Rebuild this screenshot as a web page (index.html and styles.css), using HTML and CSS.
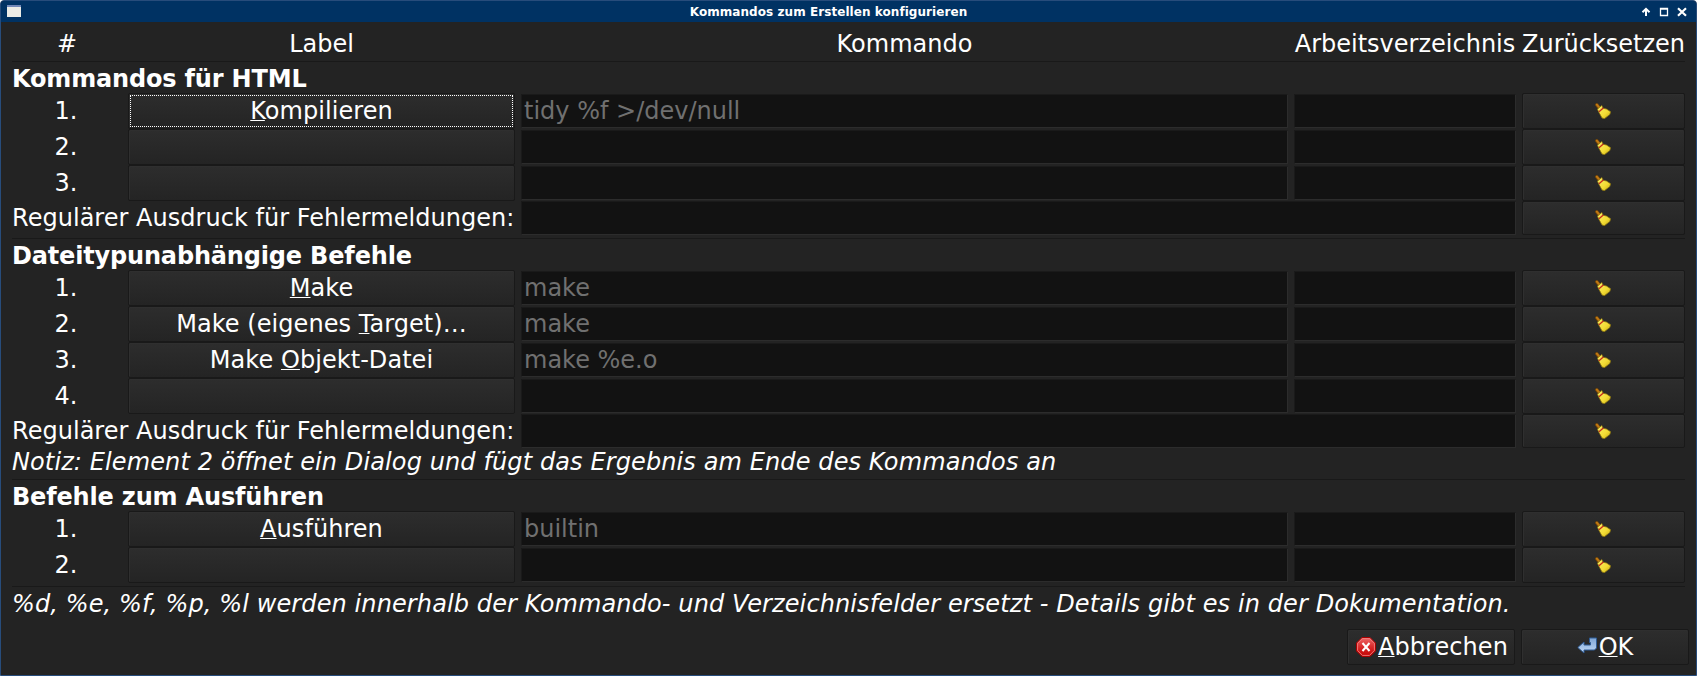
FILE: index.html
```
<!DOCTYPE html>
<html lang="de">
<head>
<meta charset="utf-8">
<title>Kommandos zum Erstellen konfigurieren</title>
<link rel="stylesheet" href="styles.css">
</head>
<body>
<svg class="defs" width="0" height="0" aria-hidden="true">
  <defs>
    <linearGradient id="gold" x1="0" y1="0" x2="1" y2="1"><stop offset="0" stop-color="#f8ec6a"/><stop offset=".6" stop-color="#f3dc34"/><stop offset="1" stop-color="#c4a812"/></linearGradient>
    <linearGradient id="red" x1="0" y1="0" x2="0" y2="1"><stop offset="0" stop-color="#ee6a6a"/><stop offset=".5" stop-color="#d92a2a"/><stop offset="1" stop-color="#c00000"/></linearGradient>
    <linearGradient id="blue" x1="0" y1="0" x2="0" y2="1"><stop offset="0" stop-color="#7fa6d6"/><stop offset="1" stop-color="#c0d8f4"/></linearGradient>
    <symbol id="broom" viewBox="0 0 16 16">
      <path d="M1.8 1.8 5 6" stroke="#7a4a08" stroke-width="3.4" stroke-linecap="round"/>
      <path d="M1.8 1.6 4.8 5.2" stroke="#c27a14" stroke-width="1.8" stroke-linecap="round"/>
      <path d="M2.400 6.200 6.800 2.400 8 5.200 11.500 6 15.700 8.800 14.800 11.600 9.400 15.700 7 15 4 9.600z" fill="url(#gold)" stroke="#857010" stroke-width=".8"/>
      <path d="M4 8.800 8.300 5" stroke="#c42a1c" stroke-width="1.300"/>
    </symbol>
  </defs>
</svg>
<div class="window">
  <header class="titlebar">
    <svg class="app-icon" width="14" height="12" viewBox="0 0 14 12"><path d="M0 0h14v12H0z" fill="#ecece6"/><path d="M0 0h14v2H0z" fill="#7288b8"/></svg>
    <span class="title">Kommandos zum Erstellen konfigurieren</span>
    <svg class="controls" width="46" height="10" viewBox="0 0 46 10"><path d="M5 9V3M1.5 5.2 5 1.8 8.5 5.2" fill="none" stroke="#fff" stroke-width="2"/><path d="M19.500 1.500h7v7h-7zM19 2.200h8" fill="none" stroke="#fff" stroke-width="1.300"/><path d="m37 1.200 8 7.600M45 1.200l-8 7.600" stroke="#fff" stroke-width="2.200"/></svg>
  </header>
  <main class="content">
    <div class="row head"><span>#</span><span>Label</span><span>Kommando</span><span>Arbeitsverzeichnis</span><span>Zurücksetzen</span></div>
    <hr class="sep">
    <h2 class="heading">Kommandos für HTML</h2>
    <div class="row"><span class="num">1.</span><button class="btn focused"><span><u>K</u>ompilieren</span></button><div class="entry">tidy %f &gt;/dev/null</div><div class="entry"></div><button class="btn reset"><svg class="icon"><use href="#broom"/></svg></button></div>
    <div class="row"><span class="num">2.</span><button class="btn"></button><div class="entry"></div><div class="entry"></div><button class="btn reset"><svg class="icon"><use href="#broom"/></svg></button></div>
    <div class="row"><span class="num">3.</span><button class="btn"></button><div class="entry"></div><div class="entry"></div><button class="btn reset"><svg class="icon"><use href="#broom"/></svg></button></div>
    <div class="row regex"><span class="wide-label">Regulärer Ausdruck für Fehlermeldungen:</span><div class="entry wide-entry"></div><button class="btn reset"><svg class="icon"><use href="#broom"/></svg></button></div>
    <hr class="sep">
    <h2 class="heading">Dateitypunabhängige Befehle</h2>
    <div class="row"><span class="num">1.</span><button class="btn"><span><u>M</u>ake</span></button><div class="entry">make</div><div class="entry"></div><button class="btn reset"><svg class="icon"><use href="#broom"/></svg></button></div>
    <div class="row"><span class="num">2.</span><button class="btn"><span>Make (eigenes <u>T</u>arget)…</span></button><div class="entry">make</div><div class="entry"></div><button class="btn reset"><svg class="icon"><use href="#broom"/></svg></button></div>
    <div class="row"><span class="num">3.</span><button class="btn"><span>Make <u>O</u>bjekt-Datei</span></button><div class="entry">make %e.o</div><div class="entry"></div><button class="btn reset"><svg class="icon"><use href="#broom"/></svg></button></div>
    <div class="row"><span class="num">4.</span><button class="btn"></button><div class="entry"></div><div class="entry"></div><button class="btn reset"><svg class="icon"><use href="#broom"/></svg></button></div>
    <div class="row regex"><span class="wide-label">Regulärer Ausdruck für Fehlermeldungen:</span><div class="entry wide-entry"></div><button class="btn reset"><svg class="icon"><use href="#broom"/></svg></button></div>
    <p class="note">Notiz: Element 2 öffnet ein Dialog und fügt das Ergebnis am Ende des Kommandos an</p>
    <hr class="sep">
    <h2 class="heading">Befehle zum Ausführen</h2>
    <div class="row"><span class="num">1.</span><button class="btn"><span><u>A</u>usführen</span></button><div class="entry">builtin</div><div class="entry"></div><button class="btn reset"><svg class="icon"><use href="#broom"/></svg></button></div>
    <div class="row"><span class="num">2.</span><button class="btn"></button><div class="entry"></div><div class="entry"></div><button class="btn reset"><svg class="icon"><use href="#broom"/></svg></button></div>
    <hr class="sep">
    <p class="note">%d, %e, %f, %p, %l werden innerhalb der Kommando- und Verzeichnisfelder ersetzt - Details gibt es in der Dokumentation.</p>
  </main>
  <footer class="actions">
    <button class="btn cancel"><svg class="action-icon" viewBox="0 0 20 20"><path d="M6 .5h8L19.500 6v8L14 19.500H6L.5 14V6z" fill="url(#red)" stroke="#a80000"/><path d="M6.500 1.600h7l4.900 4.900v7l-4.900 4.900h-7l-4.900-4.900v-7z" fill="none" stroke="#f08080" stroke-width=".9"/><path d="m6.500 6 7 8M13.500 6l-7 8" stroke="#fff" stroke-width="2"/></svg><span><u>A</u>bbrechen</span></button>
    <button class="btn"><svg class="action-icon" viewBox="0 0 20 20"><path d="M.8 10.500 7 5v3h6.500V5.500h-1V1H19.500v10L17.500 13H7v3z" fill="url(#blue)" stroke="#2f5c96"/></svg><span><u>O</u>K</span></button>
  </footer>
</div>
</body>
</html>
```
FILE: styles.css
```
* { box-sizing: border-box; }
body { margin: 0; background: #fff; }
.defs { position: absolute; }
.window {
  display: flex; flex-direction: column;
  width: 1697px; height: 676px; overflow: hidden;
  border: 1px solid #274c7b; border-radius: 4px 4px 0 0;
  background: #232323; color: #fff;
  font: 24px/28px "DejaVu Sans", sans-serif;
}
.titlebar {
  display: grid; grid-template-columns: 14px 1fr 46px; align-items: center;
  height: 21px; padding: 1px 9px 0 6px; background: #003263;
}
.app-icon { margin-bottom: 2px; }
.title {
  padding-right: 5px; font-size: 12px; line-height: 14px; font-weight: bold;
  letter-spacing: 0.06px; text-align: center;
}
.content { padding: 8px 11px 0; }
.row {
  display: grid; grid-template-columns: 110px 387px 767px 222px 163px; column-gap: 6px;
  align-items: center; height: 36px; text-align: center; white-space: nowrap;
}
.row.head { height: 28px; }
.row.regex { height: 34px; }
.num { padding-right: 2px; }
.wide-label { grid-column: 1 / 3; text-align: left; letter-spacing: 0.03px; }
.wide-entry { grid-column: 3 / 5; }
.sep { height: 1px; margin: 3px 0; border: 0; background: #191919; }
.heading, .note { margin: 0; height: 28px; font-size: 24px; line-height: 28px; white-space: nowrap; }
.heading { letter-spacing: -0.17px; }
.note { font-style: italic; letter-spacing: 0.11px; }
.btn {
  display: flex; align-items: center; justify-content: center;
  height: 100%; min-width: 0; padding: 0; color: #fff; font: inherit;
  letter-spacing: 0.05px;
  border: 1px solid #191919; border-radius: 2px;
  background: linear-gradient(#2d2d2d, #242424);
  box-shadow: inset 1px 1px 0 #2f2f2f;
}
.focused { outline: 1px dotted #fff; outline-offset: -3px; }
.btn u { text-decoration: underline; text-decoration-thickness: 1px; text-underline-offset: 1px; text-decoration-skip-ink: none; }
.reset { padding-right: 2px; }
.icon { width: 16px; height: 16px; }
.entry {
  height: 34px; padding: 2px; text-align: left; color: #707070; background: #121212;
  border: 1px solid; border-color: #1a1a1a #2c2c2c #2c2c2c #1a1a1a; border-radius: 1px;
}
.actions { display: flex; justify-content: flex-end; gap: 6px; margin-top: 11px; padding-right: 7px; height: 36px; }
.actions .btn { width: 168px; gap: 2px; }
.actions .cancel { padding-left: 2px; }
.action-icon { width: 20px; height: 20px; }
```
